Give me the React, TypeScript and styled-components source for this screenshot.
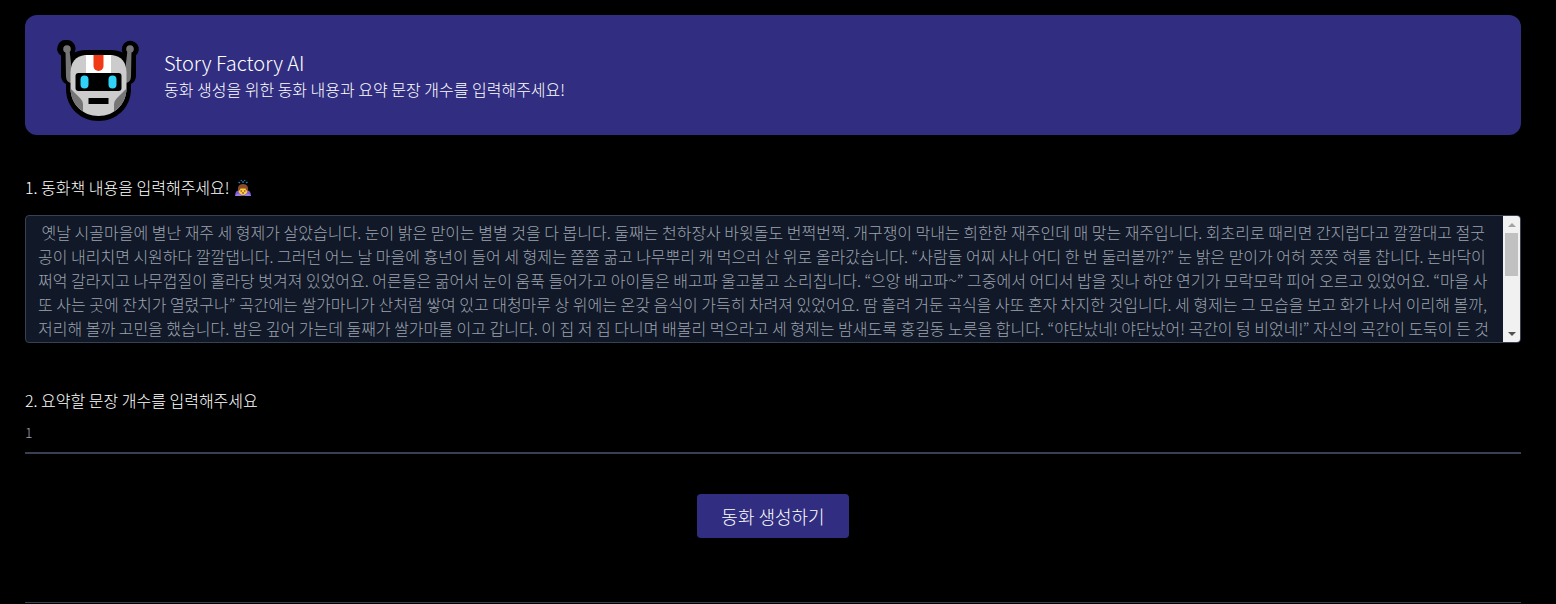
import React, { useLayoutEffect, useRef, useState } from "react";
import styled, { createGlobalStyle } from "styled-components";

const Global = createGlobalStyle`
  *, *::before, *::after { box-sizing: border-box; }
  body {
    margin: 0;
    background: #000;
    color: #fff;
    font-family: "Noto Sans CJK KR", "Noto Sans", sans-serif;
    font-size: 16px;
    font-weight: 300;
    line-height: 24px;
  }
`;

const Page = styled.main`
  padding: 15px 35px 0 25px;
`;

const Banner = styled.header`
  display: flex;
  align-items: center;
  gap: 25px;
  padding: 15px 33px;
  border-radius: 12px;
  background: #312e81;
`;

const RobotIcon = styled.svg`
  flex: none;
  width: 81px;
  height: 90px;
  overflow: visible;
`;

const Title = styled.h1`
  margin: 0;
  font-size: 20px;
  font-weight: inherit;
  font-kerning: normal;
  line-height: 28px;
`;

const Subtitle = styled.p`
  margin: 0;
`;

const Form = styled.form`
  display: flex;
  flex-direction: column;
  margin: 0;
  padding: 40px 0 64px;
`;

const Label = styled.label`
  display: flex;
  align-items: center;
  gap: 4px;
`;

const EmojiIcon = styled.svg`
  width: 18px;
  height: 18px;
`;

const StoryBox = styled.div`
  display: flex;
  height: 128px;
  margin: 16px 0 45px;
  border: 1px solid #374151;
  border-radius: 4px;
  overflow: hidden;
  background: #111827;
`;

const StoryInput = styled.textarea`
  flex: 1;
  min-width: 0;
  margin: 0;
  padding: 4px 12px;
  border: 0;
  outline: none;
  resize: none;
  overflow-y: auto;
  scrollbar-width: none;
  background: transparent;
  color: #9ca3af;
  font: inherit;
`;

const ScrollBar = styled.div`
  display: flex;
  flex-direction: column;
  flex: none;
  width: 17px;
  background: #f1f1f1;
`;

const ScrollButton = styled.button<{ $color: string }>`
  display: grid;
  place-items: center;
  height: 17px;
  padding: 0;
  border: 0;
  background: transparent;
  color: ${(p) => p.$color};
`;

const ScrollTrack = styled.div`
  flex: 1;
  padding: 0 2px;
`;

const ScrollThumb = styled.div`
  background: #c1c1c1;
`;

const CountInput = styled.input`
  width: 100%;
  height: 42px;
  padding: 0;
  border: 0;
  border-bottom: 2px solid #374151;
  border-radius: 0;
  outline: none;
  background: transparent;
  color: #9ca3af;
  font: inherit;
  font-size: 14px;
`;

const SubmitButton = styled.button`
  align-self: center;
  margin-top: 40px;
  padding: 8px 24px;
  border: 0;
  border-radius: 4px;
  background: #312e81;
  color: #fff;
  font: inherit;
  font-size: 18px;
  line-height: 28px;
`;

const Divider = styled.hr`
  height: 1px;
  margin: 0;
  border: 0;
  background: #374151;
`;

const story =
  " 옛날 시골마을에 별난 재주 세 형제가 살았습니다. 눈이 밝은 맏이는 별별 것을 다 봅니다. 둘째는 천하장사 바윗돌도 번쩍번쩍. 개구쟁이 막내는 희한한 재주인데 매 맞는 재주입니다. 회초리로 때리면 간지럽다고 깔깔대고 절굿공이 내리치면 시원하다 깔깔댑니다. 그러던 어느 날 마을에 흉년이 들어 세 형제는 쫄쫄 굶고 나무뿌리 캐 먹으러 산 위로 올라갔습니다. “사람들 어찌 사나 어디 한 번 둘러볼까?” 눈 밝은 맏이가 어허 쯧쯧 혀를 찹니다. 논바닥이 쩌억 갈라지고 나무껍질이 홀라당 벗겨져 있었어요. 어른들은 굶어서 눈이 움푹 들어가고 아이들은 배고파 울고불고 소리칩니다. “으앙 배고파~” 그중에서 어디서 밥을 짓나 하얀 연기가 모락모락 피어 오르고 있었어요. “마을 사또 사는 곳에 잔치가 열렸구나” 곡간에는 쌀가마니가 산처럼 쌓여 있고 대청마루 상 위에는 온갖 음식이 가득히 차려져 있었어요. 땀 흘려 거둔 곡식을 사또 혼자 차지한 것입니다. 세 형제는 그 모습을 보고 화가 나서 이리해 볼까, 저리해 볼까 고민을 했습니다. 밤은 깊어 가는데 둘째가 쌀가마를 이고 갑니다. 이 집 저 집 다니며 배불리 먹으라고 세 형제는 밤새도록 홍길동 노릇을 합니다. “야단났네! 야단났어! 곡간이 텅 비었네!” 자신의 곡간이 도둑이 든 것" +
  "을 안 사또는 화가 나서 펄펄 뛰었습니다.\n막내가 나서서 매를 맞았습니다.\n막내는 간지럽다고 깔깔 웃었습니다.\n사또는 잘못을 뉘우쳤습니다.\n마을 사람들은 곡식을 나누었습니다.\n세 형제는 오래오래 행복하게 살았습니다.";

function Robot() {
  return (
    <RobotIcon viewBox="0 -10 81 90" aria-hidden="true">
      <path
        d="M8.500 0a8.500 8.500 0 0 1 8 12.500Q21 10 28 10h25q7 0 11.500 2.500A8.500 8.500 0 1 1 78 15.500V36q0 5-5 8v5c0 19-15 32-32.500 32S8 68 8 49v-5q-5-3-5-8V15.500A8.500 8.500 0 0 1 8.500 0Z"
        fill="#000"
      />
      <g fill="#767676">
        <circle cx="9" cy="9" r="3.800" />
        <circle cx="72" cy="9" r="3.800" />
        <path d="M7.500 10h4l1.500 13v20q-5-1-5-7ZM73.500 10h-4L68 23v20q5-1 5-7Z" />
      </g>
      <path
        d="M27 15h27q14 2 14.500 17v16c0 16-12 28-28 28s-28-12-28-28V32Q13 17 27 15Z"
        fill="#ccc"
      />
      <path
        d="M12.500 48.500 22 58q3 3 3 6v7.500C17 66 12.500 58 12.500 48.500ZM68.500 48.500 59 58q-3 3-3 6v7.500C64 66 68.500 58 68.500 48.500Z"
        fill="#767676"
      />
      <path d="M28 15h25v19H28Z" fill="#fff" />
      <path d="M35.500 15h10v11a5 5 0 0 1-10 0Z" fill="#f03a17" />
      <rect x="17.500" y="33" width="46" height="18" rx="3" />
      <rect x="22.500" y="35.500" width="8" height="13" rx="4" fill="#31d2f7" />
      <rect x="50.500" y="35.500" width="8" height="13" rx="4" fill="#31d2f7" />
      <path d="M30.500 58h20v6h-20Z" />
    </RobotIcon>
  );
}

function BowingPerson() {
  return (
    <EmojiIcon viewBox="0 0 18 18" aria-hidden="true">
      <path
        d="M4.500 4l1.500 1M9 3v2M13.500 4L12 5M7 2l.6 1M11 2l-.6 1"
        stroke="#2485c0"
        strokeWidth="1.200"
      />
      <path d="M1 18q0-6 5-6h6q5 0 5 6Z" fill="#7b5bd0" />
      <circle cx="9" cy="12.500" r="4.500" fill="#ffc83d" />
      <path d="M4 13q-1-7 5-7t5 7q-2-.5-2.500-2.500h-5Q6 12.500 4 13Z" fill="#8a4b2d" />
      <path d="M6.500 13H8M10 13h1.500M8 15h2" stroke="#5a3a17" />
      <path d="M1 18q1-2.500 4-2.500L7.500 18ZM17 18q-1-2.500-4-2.500L10.500 18Z" fill="#9b7bea" />
    </EmojiIcon>
  );
}

function StoryField() {
  const input = useRef<HTMLTextAreaElement>(null);
  const [view, setView] = useState({ top: 0, visible: 1, total: 1 });

  const measure = () => {
    const el = input.current;
    if (el) setView({ top: el.scrollTop, visible: el.clientHeight, total: el.scrollHeight });
  };
  useLayoutEffect(() => {
    measure();
    window.addEventListener("resize", measure);
    return () => window.removeEventListener("resize", measure);
  }, []);

  const scroll = (distance: number) => input.current?.scrollBy({ top: distance });
  const track = Math.max(0, view.visible - 34);

  return (
    <StoryBox>
      <StoryInput
        id="story"
        ref={input}
        defaultValue={story}
        spellCheck={false}
        onScroll={measure}
        onInput={measure}
      />
      <ScrollBar>
        <ScrollButton type="button" aria-label="위로" $color="#a3a3a3" onClick={() => scroll(-24)}>
          <svg width="8" height="4" viewBox="0 0 8 4">
            <path d="M4 0 8 4H0Z" fill="currentColor" />
          </svg>
        </ScrollButton>
        <ScrollTrack>
          <ScrollThumb
            style={{
              height: Math.round((track * view.visible) / view.total),
              transform: `translateY(${Math.round((track * view.top) / view.total)}px)`,
            }}
          />
        </ScrollTrack>
        <ScrollButton type="button" aria-label="아래로" $color="#505050" onClick={() => scroll(24)}>
          <svg width="8" height="4" viewBox="0 0 8 4">
            <path d="M0 0h8L4 4Z" fill="currentColor" />
          </svg>
        </ScrollButton>
      </ScrollBar>
    </StoryBox>
  );
}

export default function App() {
  return (
    <>
      <Global />
      <Page>
        <Banner>
          <Robot />
          <div>
            <Title>Story Factory AI</Title>
            <Subtitle>동화 생성을 위한 동화 내용과 요약 문장 개수를 입력해주세요!</Subtitle>
          </div>
        </Banner>
        <Form onSubmit={(event) => event.preventDefault()}>
          <Label htmlFor="story">
            1. 동화책 내용을 입력해주세요!
            <BowingPerson />
          </Label>
          <StoryField />
          <Label htmlFor="count">2. 요약할 문장 개수를 입력해주세요</Label>
          <CountInput id="count" type="text" inputMode="numeric" defaultValue="1" />
          <SubmitButton type="submit">동화 생성하기</SubmitButton>
        </Form>
        <Divider />
      </Page>
    </>
  );
}
